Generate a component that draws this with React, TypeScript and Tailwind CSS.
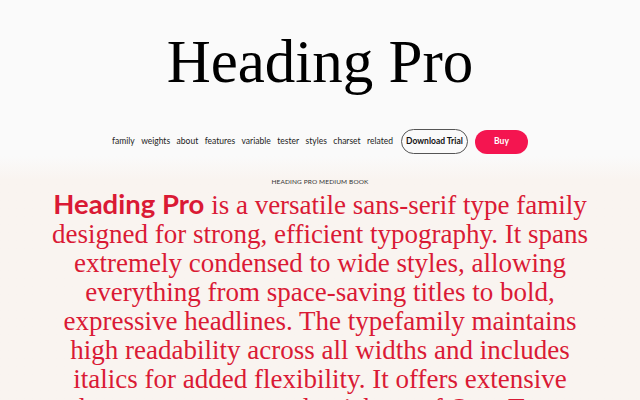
import React from "react"

const links = ["family", "weights", "about", "features", "variable", "tester", "styles", "charset", "related"]

export default function App() {
  return (
    <div className="min-h-[400px] bg-[#f9f4f0]">
      <header className="bg-[#fafafa] pt-[31px] pb-[2px]">
        <h1 className="text-center font-['Liberation_Serif',serif] text-[61px] leading-none text-black">
          Heading Pro
        </h1>
        <nav className="mt-[37px] flex items-center justify-center font-['Lato',sans-serif] text-[8.5px] text-[#222]">
          <div className="flex items-center gap-[6.5px]">
            {links.map((l) => (
              <a key={l} href="#" className="leading-none">
                {l}
              </a>
            ))}
          </div>
          <a
            href="#"
            className="ml-[8px] flex h-[25px] w-[67px] items-center justify-center rounded-full border border-[#555] text-[8.5px] font-bold text-[#111]"
          >
            Download Trial
          </a>
          <a
            href="#"
            className="ml-[7px] flex h-[24px] w-[53px] items-center justify-center rounded-full bg-[#f41550] text-[8.5px] font-bold text-white"
          >
            Buy
          </a>
        </nav>
      </header>

      <section className="bg-gradient-to-b from-[#fafafa] to-[#f9f4f0] to-[24px] pt-[21px]">
        <p className="text-center font-['Lato',sans-serif] text-[6.5px] uppercase leading-[10px] tracking-[0.02em] text-[#333]">
          Heading Pro Medium Book
        </p>
        <p className="mx-auto mt-[2px] max-w-[560px] text-center font-['Liberation_Serif',serif] text-[27px] leading-[29px] text-[#da1a35]">
          <span className="font-['Lato',sans-serif] text-[27.5px] font-bold">Heading Pro</span> is a versatile
          sans-serif type family designed for strong, efficient typography. It spans extremely condensed to
          wide styles, allowing everything from space-saving titles to bold, expressive headlines. The
          typefamily maintains high readability across all widths and includes italics for added flexibility.
          It offers extensive language support and a rich set of OpenType features.
        </p>
      </section>
    </div>
  )
}
